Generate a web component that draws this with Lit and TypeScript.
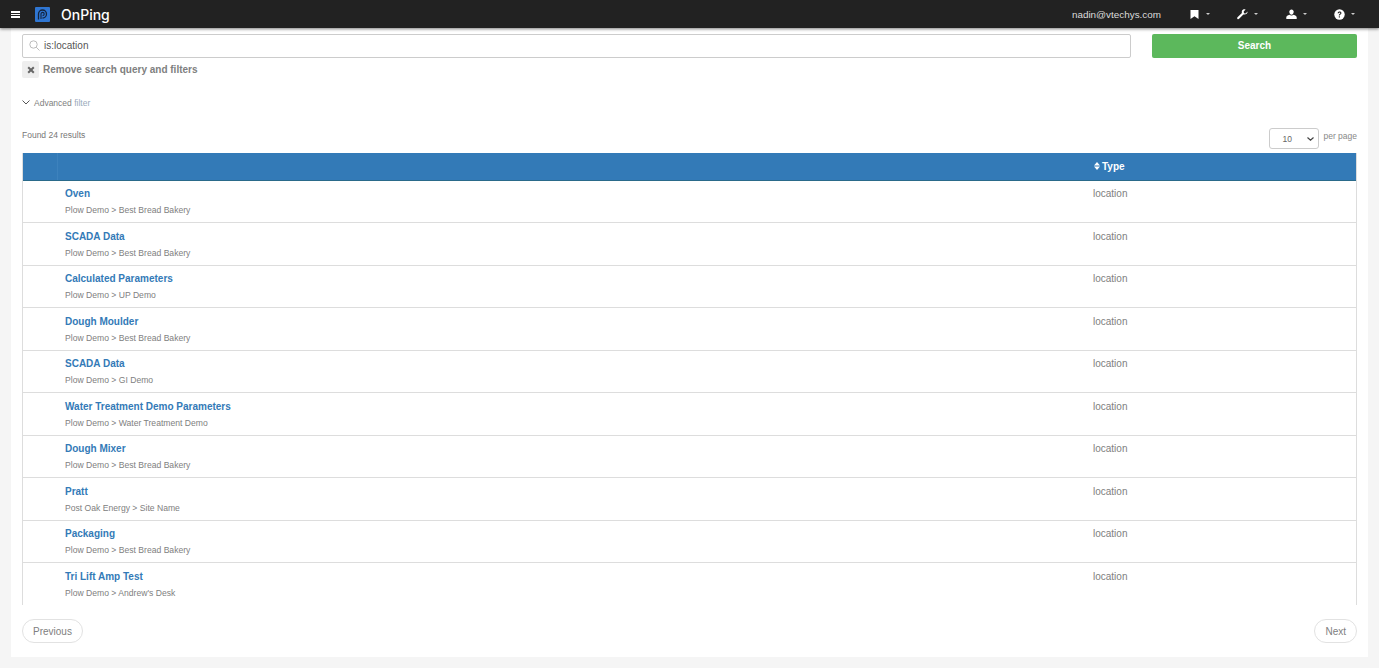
import { LitElement, css, html, svg } from "lit";
import { customElement } from "lit/decorators.js";

const rows = [
  ["Oven", "Plow Demo > Best Bread Bakery"],
  ["SCADA Data", "Plow Demo > Best Bread Bakery"],
  ["Calculated Parameters", "Plow Demo > UP Demo"],
  ["Dough Moulder", "Plow Demo > Best Bread Bakery"],
  ["SCADA Data", "Plow Demo > GI Demo"],
  ["Water Treatment Demo Parameters", "Plow Demo > Water Treatment Demo"],
  ["Dough Mixer", "Plow Demo > Best Bread Bakery"],
  ["Pratt", "Post Oak Energy > Site Name"],
  ["Packaging", "Plow Demo > Best Bread Bakery"],
  ["Tri Lift Amp Test", "Plow Demo > Andrew's Desk"],
];

const caret = html`<span class="caret"></span>`;

const bookmark = svg`<path d="M1.500 1h8v9L5.500 7.300 1.500 10z" fill="#fff" />`;
const wrench = svg`<path d="M10.600 2.600 8.600 4.500 7 4.200 6.700 2.600 8.600.6C7 0 5.400.6 4.900 2c-.2.6-.2 1.300 0 1.900L.5 8.300c-.5.5-.5 1.200 0 1.600s1.100.4 1.600-.1l4.300-4.400c1.900.6 4.400-.6 4.200-2.800z" fill="#fff" />`;
const user = svg`<path d="M3.300 2.800C3.300 1.300 4.200.4 5.500.4s2.200.9 2.200 2.400-.9 3-2.200 3-2.200-1.500-2.200-3z" fill="#fff" /><path d="M.3 10V8.300C.3 7 1.800 6.500 3.400 5.800c1.300 1.100 2.900 1.100 4.200 0 1.600.7 3.100 1.200 3.100 2.500V10z" fill="#fff" />`;
const help = svg`<circle cx="5.500" cy="5.500" r="5.200" fill="#fff" /><path d="M3.600 4.300c.1-2.300 3.900-2.400 3.900-.2 0 1.500-1.700 1.400-1.700 2.500H4.800c0-1.700 1.600-1.700 1.600-2.500 0-.8-1.500-.7-1.600.2z" fill="#222" /><rect x="4.800" y="7.300" width="1.100" height="1.200" fill="#222" />`;

@customElement("app-root")
export class AppRoot extends LitElement {
  static styles = css`
    :host {
      display: block;
      height: 668px;
      overflow: hidden;
      background: #f5f5f5;
      font-family: "Liberation Sans", Arial, sans-serif;
      font-size: 9px;
      color: #777;
    }
    .nav {
      position: relative;
      z-index: 2;
      height: 28px;
      box-sizing: border-box;
      background: #222;
      box-shadow: 0 1px 3px rgba(0, 0, 0, 0.5);
      display: flex;
      align-items: center;
      padding: 0 24px 0 11px;
      color: #fff;
    }
    .burger {
      width: 9px;
      height: 7px;
      border-top: 2px solid #fff;
      border-bottom: 2px solid #fff;
      position: relative;
      box-sizing: border-box;
      margin-right: 15px;
    }
    .burger::after {
      content: "";
      position: absolute;
      left: 0;
      right: 0;
      top: 1px;
      height: 1px;
      background: #fff;
    }
    .logo {
      width: 15px;
      height: 15px;
      margin-right: 11px;
    }
    .brand {
      font-family: Inter, "Liberation Sans", sans-serif;
      font-weight: 500;
      font-size: 14px;
      flex: 1;
    }
    .email {
      font-size: 9.900px;
      color: #ddd;
    }
    .menu {
      display: flex;
      align-items: center;
      gap: 6px;
      margin-left: 27.500px;
    }
    .menu svg {
      width: 11px;
      height: 11px;
      display: block;
    }
    .caret {
      width: 0;
      height: 0;
      border-left: 2px solid transparent;
      border-right: 2px solid transparent;
      border-top: 2px solid #ccc;
    }
    .panel {
      margin: 0 11px;
      height: 629px;
      box-sizing: border-box;
      background: #fff;
      padding: 6px 11px 0;
    }
    .search {
      display: flex;
      gap: 21px;
    }
    .input {
      flex: 1;
      height: 24px;
      box-sizing: border-box;
      border: 1px solid #ccc;
      border-radius: 2px;
      display: flex;
      align-items: center;
      padding: 0 0 1px 6px;
      gap: 4px;
      font-size: 10px;
      color: #555;
    }
    .input svg {
      width: 11px;
      height: 11px;
    }
    .go {
      width: 205px;
      height: 24px;
      box-sizing: border-box;
      padding-bottom: 1px;
      border-radius: 2px;
      background: #5cb85c;
      color: #fff;
      font-weight: bold;
      font-size: 10px;
      display: flex;
      align-items: center;
      justify-content: center;
    }
    .remove {
      display: flex;
      align-items: center;
      gap: 4px;
      margin-top: 3px;
      height: 17px;
      font-weight: bold;
      font-size: 10px;
      color: #808080;
    }
    .x {
      width: 17px;
      height: 17px;
      border-radius: 2px;
      background: #eee;
      display: flex;
      align-items: center;
      justify-content: center;
    }
    .x svg {
      width: 8px;
      height: 8px;
    }
    .advanced {
      display: flex;
      align-items: center;
      gap: 4px;
      margin-top: 19px;
      height: 11px;
      font-size: 8.500px;
      color: #808080;
    }
    .advanced svg {
      width: 8px;
      height: 5px;
    }
    .advanced b {
      font-weight: normal;
      color: #9ab;
    }
    .found {
      display: flex;
      justify-content: space-between;
      margin-top: 20px;
      height: 25px;
      font-size: 8.500px;
      color: #777;
    }
    .found > span {
      margin-top: 2px;
    }
    .pp {
      display: flex;
      align-items: flex-start;
    }
    .pp span {
      margin-top: 3px;
      margin-left: 4px;
      color: #888;
    }
    .select {
      width: 50px;
      height: 21px;
      box-sizing: border-box;
      border: 1px solid #ccc;
      border-radius: 3px;
      display: flex;
      align-items: center;
      justify-content: space-between;
      padding: 0 4px 0 12px;
      color: #666;
    }
    .select svg {
      width: 7px;
      height: 4px;
    }
    .table {
      height: 452px;
      overflow: hidden;
      border-left: 1px solid #ddd;
      border-right: 1px solid #ddd;
    }
    .head {
      height: 27.500px;
      box-sizing: border-box;
      margin: 0 -1px;
      background: #337ab7;
      border-bottom: 1px solid #2a6a8a;
      display: grid;
      grid-template-columns: 36px 1fr 263px;
      align-items: center;
      color: #fff;
      font-weight: bold;
      font-size: 10px;
    }
    .head i {
      display: block;
      height: 100%;
      border-right: 1px solid #3d82bd;
    }
    .type {
      display: flex;
      align-items: center;
      gap: 2px;
    }
    .type svg {
      width: 6px;
      height: 8px;
    }
    .row {
      height: 42.500px;
      box-sizing: border-box;
      border-bottom: 1px solid #ddd;
      display: grid;
      grid-template-columns: 1fr 263px;
      padding-left: 42px;
    }
    .row:last-child {
      border-bottom: none;
    }
    .name {
      display: block;
      margin-top: 6.500px;
      height: 13px;
      line-height: 13px;
      color: #337ab7;
      font-weight: bold;
      font-size: 10px;
    }
    .path {
      display: block;
      margin-top: 5px;
      height: 11px;
      line-height: 11px;
      font-size: 8.600px;
      color: #808080;
    }
    .loc {
      margin-top: 6.500px;
      line-height: 13px;
      font-size: 10px;
      color: #808080;
    }
    .pager {
      display: flex;
      justify-content: space-between;
      margin-top: 14px;
    }
    .pager span {
      height: 24px;
      box-sizing: border-box;
      padding: 0 10px;
      border: 1px solid #e2e2e2;
      border-radius: 12px;
      display: flex;
      align-items: center;
      font-size: 10px;
      color: #808080;
    }
  `;

  render() {
    return html`
      <div class="nav">
        <span class="burger"></span>
        <svg class="logo" viewBox="0 0 15 15">
          <rect width="15" height="15" rx="1" fill="#2f76d2" />
          <path d="M3.500 12.500V7a4 4 0 1 1 4 4" fill="none" stroke="#14243c" stroke-width="1.300" />
          <path d="M6 12V7a1.600 1.600 0 1 1 1.600 1.600" fill="none" stroke="#14243c" stroke-width="1.100" />
        </svg>
        <span class="brand">OnPing</span>
        <span class="email">nadin@vtechys.com</span>
        <span class="menu"><svg viewBox="0 0 11 11">${bookmark}</svg>${caret}</span>
        <span class="menu"><svg viewBox="0 0 11 11">${wrench}</svg>${caret}</span>
        <span class="menu"><svg viewBox="0 0 11 11">${user}</svg>${caret}</span>
        <span class="menu"><svg viewBox="0 0 11 11">${help}</svg>${caret}</span>
      </div>
      <div class="panel">
        <div class="search">
          <div class="input">
            <svg viewBox="0 0 11 11" fill="none" stroke="#bbb" stroke-width="1">
              <circle cx="4.500" cy="4.500" r="3.700" />
              <path d="M7.200 7.200 10.500 10.500" />
            </svg>
            is:location
          </div>
          <div class="go">Search</div>
        </div>
        <div class="remove">
          <span class="x">
            <svg viewBox="0 0 8 8"><path d="M1.200 1.200 6.800 6.800M6.800 1.200 1.200 6.800" stroke="#666" stroke-width="2" /></svg>
          </span>
          Remove search query and filters
        </div>
        <div class="advanced">
          <svg viewBox="0 0 8 5" fill="none" stroke="#555" stroke-width="1"><path d="M.5.500 4 4 7.500.500" /></svg>
          <span>Advanced <b>filter</b></span>
        </div>
        <div class="found">
          <span>Found 24 results</span>
          <div class="pp">
            <div class="select">
              10
              <svg viewBox="0 0 7 4" fill="none" stroke="#444" stroke-width="1.200"><path d="M.5.500 3.500 3.200 6.500.500" /></svg>
            </div>
            <span>per page</span>
          </div>
        </div>
        <div class="table">
          <div class="head">
            <i></i>
            <span></span>
            <span class="type">
              <svg viewBox="0 0 6 8" fill="#fff"><path d="M3 0 6 3.400H0zM3 8 0 4.600H6z" /></svg>
              Type
            </span>
          </div>
          ${rows.map(
            ([name, path]) => html`
              <div class="row">
                <div>
                  <span class="name">${name}</span>
                  <span class="path">${path}</span>
                </div>
                <div class="loc">location</div>
              </div>
            `
          )}
        </div>
        <div class="pager">
          <span>Previous</span>
          <span>Next</span>
        </div>
      </div>
    `;
  }
}
